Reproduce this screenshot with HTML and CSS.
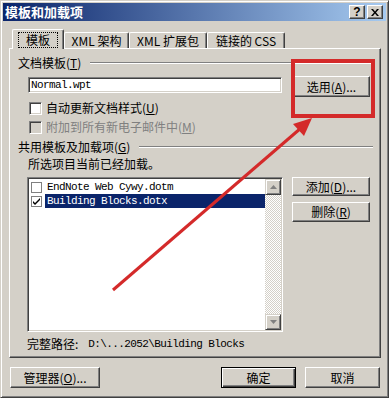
FILE: index.html
```html
<!DOCTYPE html>
<html>
<head>
<meta charset="utf-8">
<link rel="stylesheet" href="styles.css">
</head>
<body>
<div class="window">
  <div class="titlebar">
    <span class="title">模板和加载项</span>
    <span class="tbtn help">?</span>
    <span class="tbtn close"><svg width="8" height="7" viewBox="0 0 8 7"><path d="M0 0h2l2 2.5 2-2.5h2l-3 3.5 3 3.5h-2l-2-2.5-2 2.5h-2l3-3.5z" fill="#000"/></svg></span>
  </div>
  <div class="content">
    <div class="tabs">
      <div class="tab selected"><span class="focus">模板</span></div>
      <div class="tab t2">XML 架构</div>
      <div class="tab t3">XML 扩展包</div>
      <div class="tab t4">链接的 CSS</div>
    </div>
    <div class="panel">
      <div class="group"><span>文档模板(<u>T</u>)</span><span class="gline"></span></div>
      <div class="row-tpl">
        <div class="textbox mono">Normal.wpt</div>
        <div class="btn btn-choose">选用(<u>A</u>)...</div>
      </div>
      <div class="check-row first"><span class="cb"></span><span>自动更新文档样式(<u>U</u>)</span></div>
      <div class="check-row second disabled"><span class="cb"></span><span>附加到所有新电子邮件中(<u>M</u>)</span></div>
      <div class="group g2"><span>共用模板及加载项(<u>G</u>)</span><span class="gline"></span></div>
      <div class="hint">所选项目当前已经加载。</div>
      <div class="row-list">
        <div class="listbox">
          <div class="items">
            <div class="item"><span class="lcb"></span><span class="itext mono">EndNote Web Cywy.dotm</span></div>
            <div class="item sel"><span class="lcb"><svg width="9" height="9" viewBox="0 0 9 9"><path d="M1 4l2 2 5-5v2l-5 5-2-2z" fill="#000"/></svg></span><span class="itext mono">Building Blocks.dotx</span></div>
          </div>
          <div class="scroll">
            <div class="sbtn"><svg width="7" height="4" viewBox="0 0 7 4"><path d="M3.5 0l3.5 4h-7z" fill="#808080"/></svg></div>
            <div class="track"></div>
            <div class="sbtn"><svg width="7" height="4" viewBox="0 0 7 4"><path d="M0 0h7l-3.5 4z" fill="#808080"/></svg></div>
          </div>
        </div>
        <div class="side-btns">
          <div class="btn btn-add">添加(<u>D</u>)...</div>
          <div class="btn btn-del">删除(<u>R</u>)</div>
        </div>
      </div>
      <div class="path"><span>完整路径:</span><span class="mono pathval">D:\...2052\Building Blocks</span></div>
    </div>
    <div class="bottom">
      <div class="btn btn-org">管理器(<u>O</u>)...</div>
      <div class="btn btn-ok">确定</div>
      <div class="btn btn-cancel">取消</div>
    </div>
  </div>
  <div class="redbox"></div>
  <svg class="arrow" width="389" height="398" viewBox="0 0 389 398">
    <line x1="113" y1="290" x2="301" y2="128" stroke="#d42a2a" stroke-width="3"/>
    <polygon points="312,118 304,136 293,124" fill="#d42a2a"/>
  </svg>
</div>
</body>
</html>
```
FILE: styles.css
```css
* { box-sizing: border-box; }
html, body { margin: 0; padding: 0; background: #d4d0c8; }
body {
  font-family: "Noto Sans CJK SC", "Noto Sans", sans-serif;
  font-size: 12px;
  line-height: 14px;
  color: #000;
}
u { text-decoration: underline; text-underline-offset: 1px; }
.mono {
  font-family: "Liberation Mono", "Noto Sans CJK SC", monospace;
  font-size: 11px;
  letter-spacing: -0.6px;
}
.window {
  position: relative;
  width: 389px;
  height: 398px;
  background: #d4d0c8;
  border: 1px solid;
  border-color: #d4d0c8 #404040 #404040 #d4d0c8;
  box-shadow: inset 1px 1px #fff, inset -1px -1px #808080;
  padding: 2px;
}
.titlebar {
  height: 18px;
  display: flex;
  align-items: center;
  padding: 0 3px 0 2px;
  background: linear-gradient(to right, #0a246a, #a6caf0);
}
.title {
  flex: 1;
  color: #fff;
  font-weight: bold;
  font-size: 13px;
}
.tbtn {
  width: 16px;
  height: 14px;
  background: #d4d0c8;
  border: 1px solid;
  border-color: #fff #404040 #404040 #fff;
  box-shadow: inset -1px -1px #808080;
  display: flex;
  align-items: center;
  justify-content: center;
  font-family: "Liberation Sans", sans-serif;
  font-weight: bold;
  font-size: 12px;
  line-height: 12px;
}
.help { margin-right: 2px; }
.content {
  padding: 8px 5px 0 6px;
}
.tabs {
  display: flex;
  align-items: flex-end;
  height: 19px;
  padding-left: 3px;
}
.tab {
  height: 16px;
  background: #d4d0c8;
  border-top: 1px solid #fff;
  border-left: 1px solid #fff;
  border-right: 1px solid #404040;
  box-shadow: inset -1px 0 #808080;
  border-radius: 2px 2px 0 0;
  display: flex;
  align-items: center;
  justify-content: center;
  white-space: nowrap;
}
.tab.selected {
  width: 52px;
  height: 20px;
  margin-bottom: -1px;
}
.focus {
  outline: 1px dotted #000;
  padding: 0 7px;
  line-height: 14px;
}
.t2 { width: 65px; }
.t3 { width: 78px; }
.t4 { width: 78px; }
.panel {
  height: 310px;
  border: 1px solid;
  border-color: #fff #404040 #404040 #fff;
  box-shadow: inset -1px -1px #808080;
  padding: 7px 7px 0 8px;
  display: flex;
  flex-direction: column;
}
.group {
  display: flex;
  align-items: center;
  height: 14px;
}
.gline {
  flex: 1;
  margin-left: 9px;
  border-top: 1px solid #808080;
  border-bottom: 1px solid #fff;
}
.g2 { margin-top: 6px; }
.row-tpl {
  display: flex;
  align-items: flex-start;
  margin-top: 6px;
}
.textbox {
  width: 254px;
  height: 16px;
  margin: 1px 0 0 10px;
  background: #fff;
  border: 1px solid;
  border-color: #808080 #fff #fff #808080;
  box-shadow: inset 1px 1px #404040, inset -1px -1px #d4d0c8;
  padding: 0 2px;
  line-height: 14px;
}
.btn {
  height: 21px;
  background: #d4d0c8;
  border: 1px solid;
  border-color: #fff #404040 #404040 #fff;
  box-shadow: inset -1px -1px #808080;
  display: flex;
  align-items: center;
  justify-content: center;
  white-space: nowrap;
}
.btn-choose { width: 77px; margin-left: 11px; }
.check-row {
  display: flex;
  align-items: center;
  height: 14px;
  padding-left: 11px;
  gap: 4px;
}
.check-row.first { margin-top: 4px; }
.check-row.second { margin-top: 5px; }
.cb {
  width: 13px;
  height: 13px;
  background: #fff;
  border: 1px solid;
  border-color: #808080 #fff #fff #808080;
  box-shadow: inset 1px 1px #404040, inset -1px -1px #d4d0c8;
}
.disabled { color: #808080; }
.disabled .cb { background: #d4d0c8; }
.hint { margin: 3px 0 0 10px; height: 14px; }
.row-list {
  display: flex;
  align-items: flex-start;
  margin-top: 6px;
}
.listbox {
  width: 256px;
  height: 155px;
  margin-left: 9px;
  background: #fff;
  border: 1px solid;
  border-color: #808080 #fff #fff #808080;
  box-shadow: inset 1px 1px #404040, inset -1px -1px #d4d0c8;
  padding: 1px;
  display: flex;
}
.items { flex: 1; padding-top: 1px; }
.item {
  display: flex;
  align-items: center;
  height: 14px;
  padding-left: 2px;
}
.lcb {
  width: 11px;
  height: 11px;
  background: #fff;
  border: 1px solid #808080;
  display: flex;
  align-items: center;
  justify-content: center;
  flex: none;
}
.itext {
  flex: 1;
  margin-left: 3px;
  padding-left: 2px;
  height: 14px;
  line-height: 14px;
}
.item.sel .itext { background: #0a246a; color: #fff; }
.scroll {
  width: 16px;
  display: flex;
  flex-direction: column;
}
.sbtn {
  height: 16px;
  background: #d4d0c8;
  border: 1px solid;
  border-color: #d4d0c8 #404040 #404040 #d4d0c8;
  box-shadow: inset 1px 1px #fff, inset -1px -1px #808080;
  display: flex;
  align-items: center;
  justify-content: center;
}
.track {
  flex: 1;
  background: repeating-conic-gradient(#fff 0 25%, #d4d0c8 0 50%) 0 0 / 2px 2px;
}
.side-btns {
  margin-left: 9px;
  display: flex;
  flex-direction: column;
  gap: 6px;
}
.btn-add { width: 78px; height: 19px; }
.btn-del { width: 78px; height: 20px; }
.path {
  display: flex;
  align-items: center;
  height: 14px;
  margin: 5px 0 0 9px;
  gap: 10px;
}
.bottom {
  display: flex;
  margin-top: 9px;
  padding: 0 1px;
}
.btn-org { width: 90px; }
.btn-ok {
  width: 75px;
  margin-left: auto;
  border: 1px solid #000;
  box-shadow: inset 1px 1px #fff, inset -1px -1px #404040, inset -2px -2px #808080;
}
.btn-cancel { width: 75px; margin-left: 9px; }
.redbox {
  position: absolute;
  left: 290px;
  top: 58px;
  width: 84px;
  height: 59px;
  border: 4px solid #d42a2a;
}
.arrow {
  position: absolute;
  left: -1px;
  top: -1px;
  pointer-events: none;
}
```
